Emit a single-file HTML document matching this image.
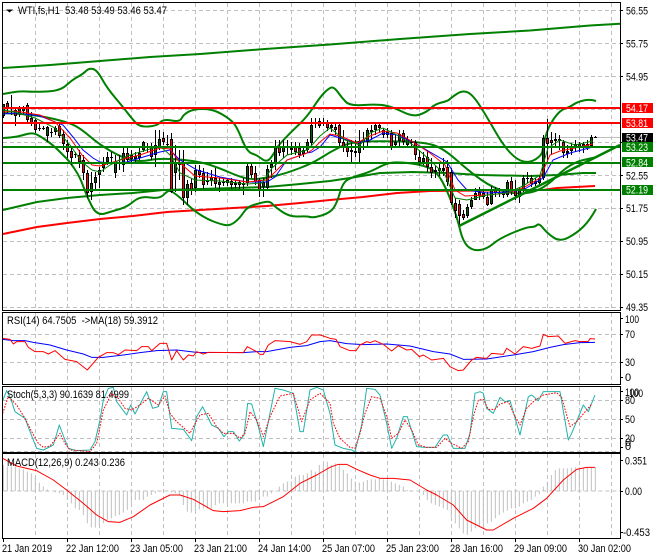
<!DOCTYPE html>
<html><head><meta charset="utf-8"><style>
html,body{margin:0;padding:0;background:#fff;width:660px;height:560px;overflow:hidden}
svg{display:block}
text{font-family:"Liberation Sans",sans-serif;font-size:11px;fill:#000}
.w{fill:#fff}
</style></head><body>
<svg width="660" height="560" viewBox="0 0 660 560" fill="none">
<defs>
<clipPath id="cs"><rect x="3" y="386" width="617" height="66"/></clipPath>
</defs>
<!-- grid -->
<path stroke="#c0c0c0" stroke-dasharray="4 3" d="M35.5 3V310M67.5 3V310M99.5 3V310M131.5 3V310M163.5 3V310M195.5 3V310M227.5 3V310M259.5 3V310M291.5 3V310M323.5 3V310M355.5 3V310M387.5 3V310M419.5 3V310M451.5 3V310M483.5 3V310M515.5 3V310M547.5 3V310M579.5 3V310M611.5 3V310
M35.5 313V384M67.5 313V384M99.5 313V384M131.5 313V384M163.5 313V384M195.5 313V384M227.5 313V384M259.5 313V384M291.5 313V384M323.5 313V384M355.5 313V384M387.5 313V384M419.5 313V384M451.5 313V384M483.5 313V384M515.5 313V384M547.5 313V384M579.5 313V384M611.5 313V384
M35.5 387V451M67.5 387V451M99.5 387V451M131.5 387V451M163.5 387V451M195.5 387V451M227.5 387V451M259.5 387V451M291.5 387V451M323.5 387V451M355.5 387V451M387.5 387V451M419.5 387V451M451.5 387V451M483.5 387V451M515.5 387V451M547.5 387V451M579.5 387V451M611.5 387V451
M35.5 454V538M67.5 454V538M99.5 454V538M131.5 454V538M163.5 454V538M195.5 454V538M227.5 454V538M259.5 454V538M291.5 454V538M323.5 454V538M355.5 454V538M387.5 454V538M419.5 454V538M451.5 454V538M483.5 454V538M515.5 454V538M547.5 454V538M579.5 454V538M611.5 454V538
M3 10.5H620M3 43.5H620M3 76.5H620M3 109.5H620M3 142.5H620M3 175.5H620M3 208.5H620M3 241.5H620M3 274.5H620M3 307.5H620
M3 334.5H620M3 362.5H620M3 400.5H620M3 419.5H620M3 438.5H620M3 451.5H620"/>
<path stroke="#c0c0c0" d="M3 137.5H620"/>
<!-- long MAs -->
<path stroke="#008000" stroke-width="2" d="M3 68L50 65L100 61L150 57L200 54L265 49L330 44.5L400 39L470 34L530 30.5L590 25.5L620 23.7"/>
<path stroke="#008000" stroke-width="2" d="M3 210L37 202L67 198L100 195L133 193L163 190L200 189L267 187L300 184L330 181L350 178L380 173L413 172L447 173L480 175L530 176L557 175L583 173L596 173"/>
<path stroke="#f00" stroke-width="2" d="M3 234L37 227L67 223L100 219L133 216L167 212L200 210L233 208L267 206L300 203L330 200L363 197L397 193L430 191L543 190L557 188L595 186"/>
<!-- Bollinger -->
<path stroke="#008000" stroke-width="2" stroke-linejoin="round" d="M3 94L11.5 92.5Q20 91 26.5 91.5Q33 92 46.5 91.5Q60 91 66 85.5Q72 80 77.5 77Q83 74 86 71Q89 68 93 69Q97 70 102 79Q107 88 115 97.5Q123 107 128 113.5Q133 120 136.500 123.5Q140 127 148.500 126.5Q157 126 160 122.5Q163 119 171.500 120.5Q180 122 181.500 118.5Q183 115 188 112Q193 109 203 109Q213 109 221.500 114Q230 119 233.500 123Q237 127 242 139.5Q247 152 252 153.5Q257 155 262 159Q267 163 271 157.5Q275 152 276 149.5Q277 147 283.500 140Q290 133 298.500 125Q307 117 313.500 107Q320 97 325 92Q330 87 332.500 87.5Q335 88 338.500 93Q342 98 346 102Q350 106 363.500 105Q377 104 385 105.5Q393 107 403 112Q413 117 420 114.5Q427 112 431 108Q435 104 441.500 102.5Q448 101 450 99Q452 97 457.500 93.5Q463 90 468 92.5Q473 95 480 106Q487 117 495 131Q503 145 510 152.5Q517 160 523.500 161.5Q530 163 536 159Q542 155 542.500 151Q543 147 545.500 137Q548 127 554 118.5Q560 110 565 108.5Q570 107 573.500 104.5Q577 102 583.500 100.5Q590 99 596 101"/>
<path stroke="#008000" stroke-width="2" stroke-linejoin="round" d="M3 113L20 114Q37 115 52 118.5Q67 122 73.500 125Q80 128 90 136.5Q100 145 111.500 151.5Q123 158 131.500 160Q140 162 150 160Q160 158 178.500 159.5Q197 161 207 164Q217 167 232 173.5Q247 180 257 179Q267 178 277 175.5Q287 173 300 168Q313 163 321.500 157.5Q330 152 340 147Q350 142 365 141.5Q380 141 401.500 141.5Q423 142 433 145Q443 148 456.500 160Q470 172 481.500 180Q493 188 505 191.5Q517 195 530 192.5Q543 190 556.500 176.5Q570 163 583.500 160Q590 158.500 597 157"/>
<path stroke="#008000" stroke-width="2" stroke-linejoin="round" d="M3 138L10 137.5Q17 137 23.500 135Q30 133 33.500 133.5Q37 134 45 139.5Q53 145 58 150Q63 155 66.500 158.5Q70 162 75 169.5Q80 177 83.500 187Q87 197 92 206.5Q97 216 105 213.5Q113 211 120 209Q127 207 133.500 201.5Q140 196 150 197.5Q160 199 164 194.5Q168 190 170.500 191Q173 192 178 196Q183 200 188 205Q193 210 200 214.5Q207 219 213.500 221.5Q220 224 225 225Q230 226 235 222Q240 218 243.500 212.5Q247 207 253.500 205Q260 203 265 202Q270 201 272.500 204Q275 207 282.500 212Q290 217 298.500 216.5Q307 216 310 217Q313 218 321.500 215.5Q330 213 333.500 208Q337 203 340 192.5Q343 182 348 179.5Q353 177 361.500 174.5Q370 172 378.500 167.5Q387 163 393.500 162.5Q400 162 411.500 163.5Q423 165 430 168.5Q437 172 442 181Q447 190 452 203.5Q457 217 460 229.5Q463 242 468 246.5Q473 251 480 250Q487 249 493.500 243.5Q500 238 513.500 232.5Q527 227 531 227Q535 227 537 225Q539 223 543 228Q547 233 553.500 237.5Q560 242 568.500 237.5Q577 233 583.500 226.5Q590 220 596 209"/>
<!-- candle wicks -->
<path stroke="#000" d="M3.5 104V118M7.5 101V114M11.5 95V115M15.5 108V126M19.5 106V117M23.5 106V114M27.5 103V122M31.5 112V126M35.5 119V133M39.5 124V131M43.5 126V130M47.5 126V142M51.5 128V137M55.5 126V135M59.5 123V138M63.5 130V150M67.5 140V158M71.5 148V165M75.5 152V158M79.5 150V168M83.5 155V180M87.5 170V198M91.5 172V200M95.5 172V190M99.5 167V188M103.5 157V172M107.5 152V165M111.5 152V162M115.5 155V178M119.5 155V170M123.5 147V172M127.5 148V162M131.5 150V162M135.5 152V162M139.5 147V160M143.5 141V152M147.5 143V152M151.5 143V160M155.5 130V167M159.5 130V150M163.5 132V145M167.5 135V147M171.5 133V193M175.5 145V192M179.5 150V180M183.5 150V205M187.5 180V205M191.5 178V195M195.5 165V192M199.5 165V178M203.5 168V190M207.5 172V185M211.5 170V186M215.5 168V188M219.5 178V192M223.5 178V186M227.5 178V186M231.5 178V190M235.5 180V188M239.5 180V190M243.5 178V195M247.5 162V186M251.5 162V178M255.5 166V185M259.5 178V197M263.5 178V197M267.5 165V190M271.5 160V178M275.5 140V170M279.5 140V156M283.5 140V158M287.5 140V155M291.5 142V155M295.5 142V155M299.5 143V158M303.5 147V157M307.5 139V153M311.5 118V146M315.5 118V128M319.5 118V128M323.5 118V126M327.5 120V131M331.5 123V132M335.5 124V135M339.5 124V147M343.5 130V152M347.5 140V157M351.5 140V162M355.5 140V157M359.5 130V162M363.5 132V150M367.5 128V147M371.5 125V140M375.5 122V135M379.5 123V133M383.5 128V138M387.5 128V138M391.5 130V150M395.5 135V148M399.5 130V147M403.5 130V145M407.5 136V147M411.5 139V146M415.5 140V160M419.5 150V165M423.5 152V165M427.5 150V172M431.5 158V178M435.5 166V178M439.5 162V176M443.5 158V176M447.5 160V186M451.5 168V205M455.5 198V218M459.5 200V226M463.5 210V220M467.5 204V218M471.5 197V209M475.5 188V200M479.5 187V200M483.5 190V199M487.5 192V206M491.5 186V205M495.5 187V197M499.5 188V197M503.5 190V198M507.5 180V197M511.5 177V195M515.5 180V200M519.5 187V203M523.5 175V192M527.5 172V183M531.5 175V187M535.5 178V186M539.5 175V186M543.5 135V180M547.5 119V162M551.5 132V155M555.5 133V147M559.5 135V150M563.5 140V158M567.5 145V158M571.5 143V155M575.5 140V152M579.5 142V152M583.5 142V153M587.5 140V150M591.5 135V147M595.5 136V138"/>
<!-- bodies black -->
<path stroke="#000" stroke-width="3" d="M3.5 104V116M7.5 103V108M11.5 107V109M15.5 110V116M19.5 108V114M23.5 107V111M27.5 105V120M31.5 118V123M35.5 120V130M39.5 128V129M43.5 128V129M47.5 127V136M51.5 132V133M55.5 128V132M59.5 126V136M63.5 134V144M67.5 144V152M71.5 151V158M75.5 154V155M79.5 155V162M83.5 160V173M87.5 173V193M91.5 183V192M95.5 177V183M99.5 170V175M103.5 163V168M107.5 157V162M111.5 157V158M115.5 163V173M119.5 162V163M123.5 153V165M127.5 153V160M131.5 155V159M135.5 156V159M139.5 153V158M143.5 142V150M147.5 146V148M151.5 146V157M155.5 145V155M159.5 139V147M163.5 138V142M167.5 144V145M171.5 139V192M175.5 163V173M179.5 162V165M183.5 163V198M187.5 184V198M191.5 183V191M195.5 170V188M199.5 170V175M203.5 173V185M207.5 180V182M211.5 177V181M215.5 178V184M219.5 182V185M223.5 182V183M227.5 180V183M231.5 181V185M235.5 183V185M239.5 182V185M243.5 183V185M247.5 166V183M251.5 166V175M255.5 173V182M259.5 180V190M263.5 182V187M267.5 169V188M271.5 164V168M275.5 147V164M279.5 147V153M283.5 147V152M287.5 147V148M291.5 148V150M295.5 146V152M299.5 148V155M303.5 150V154M307.5 142V150M311.5 125V143M315.5 123V124M319.5 121V126M323.5 122V124M327.5 123V128M331.5 125V128M335.5 127V130M339.5 125V143M343.5 142V148M347.5 147V152M351.5 150V152M355.5 151V153M359.5 141V153M363.5 140V142M367.5 130V142M371.5 130V132M375.5 125V130M379.5 125V128M383.5 130V135M387.5 132V135M391.5 133V147M395.5 142V145M399.5 134V141M403.5 133V142M407.5 139V145M411.5 142V143M415.5 142V155M419.5 157V162M423.5 158V162M427.5 157V167M431.5 167V173M435.5 170V172M439.5 168V171M443.5 168V171M447.5 167V182M451.5 172V203M455.5 203V211M459.5 204V216M463.5 214V218M467.5 207V216M471.5 200V207M475.5 193V200M479.5 192V196M483.5 193V197M487.5 197V205M491.5 190V204M495.5 190V193M499.5 193V194M503.5 192V195M507.5 182V195M511.5 181V192M515.5 189V196M519.5 190V197M523.5 178V190M527.5 178V179M531.5 178V184M535.5 181V184M539.5 178V183M543.5 138V178M547.5 138V144M551.5 140V143M555.5 139V141M559.5 139V141M563.5 142V153M567.5 151V154M571.5 147V151M575.5 144V147M579.5 144V148M583.5 144V147M587.5 144V147M591.5 137V146M595.5 137V138"/>
<path stroke="#f00" d="M7.5 104V107M15.5 111V115M27.5 106V119M31.5 119V122M35.5 121V129M59.5 127V135M63.5 135V143M67.5 145V151M71.5 152V157M79.5 156V161M83.5 161V172M87.5 174V192M127.5 154V159M151.5 147V156M163.5 139V141M171.5 140V191M183.5 164V197M191.5 184V190M199.5 171V174M203.5 174V184M215.5 179V183M231.5 182V184M239.5 183V184M251.5 167V174M255.5 174V181M259.5 181V189M279.5 148V152M295.5 147V151M299.5 149V154M319.5 122V125M327.5 124V127M335.5 128V129M339.5 126V142M343.5 143V147M347.5 148V151M379.5 126V127M383.5 131V134M391.5 134V146M403.5 134V141M415.5 143V154M419.5 158V161M427.5 158V166M431.5 168V172M447.5 168V181M451.5 173V202M455.5 204V210M459.5 205V215M463.5 215V217M479.5 193V195M483.5 194V196M487.5 198V204M495.5 191V192M503.5 193V194M511.5 182V191M515.5 190V195M531.5 179V183M547.5 139V143M551.5 141V142M563.5 143V152M579.5 145V147M587.5 145V146"/>
<path stroke="#006000" d="M3.5 105V115M19.5 109V113M23.5 108V110M47.5 128V135M55.5 129V131M91.5 184V191M95.5 178V182M99.5 171V174M103.5 164V167M107.5 158V161M115.5 164V172M123.5 154V164M131.5 156V158M135.5 157V158M139.5 154V157M143.5 143V149M155.5 146V154M159.5 140V146M175.5 164V172M187.5 185V197M195.5 171V187M211.5 178V180M219.5 183V184M227.5 181V182M247.5 167V182M263.5 183V186M267.5 170V187M271.5 165V167M275.5 148V163M283.5 148V151M303.5 151V153M307.5 143V149M311.5 126V142M359.5 142V152M367.5 131V141M375.5 126V129M387.5 133V134M395.5 143V144M399.5 135V140M407.5 140V144M423.5 159V161M439.5 169V170M467.5 208V215M471.5 201V206M475.5 194V199M491.5 191V203M507.5 183V194M519.5 191V196M523.5 179V189M535.5 182V183M539.5 179V182M543.5 139V177M571.5 148V150M575.5 145V146M583.5 145V146M591.5 138V145"/>
<!-- thin MAs -->
<path stroke="#00f" d="M3 114L15 113L40 116L63 125L73 137L83 150L93 158L100 162L110 163L127 162L140 158L160 152L170 150L180 160L197 170L220 177L247 182L267 182L275 177L287 160L307 153L312 152L320 147L330 135L337 137L357 143L370 140L383 133L397 135L413 142L430 152L447 162L458 180L467 190L487 193L507 192L523 190L543 178L553 160L570 153L593 147"/>
<path stroke="#f00" d="M3 112L15 111L40 115L55 122L70 138L82 155L92 165L100 166L110 163L127 158L140 155L160 148L170 149L180 163L195 176L220 178L247 182L267 180L275 172L287 160L307 153L312 150L320 142L330 134L340 136L357 143L370 136L383 131L397 133L413 142L430 153L445 165L455 190L465 196L487 195L507 193L523 188L540 178L550 155L560 151L570 149L593 144"/>
<path stroke="#008000" d="M3 110L15 112L35 118L55 128L70 145L82 162L92 170L100 172L110 165L127 156L140 152L160 146L170 155L180 173L195 180L220 181L247 184L262 183L272 168L287 155L307 150L312 145L320 136L330 128L345 140L360 145L370 133L383 128L397 135L413 145L430 160L445 175L455 198L467 200L487 195L507 193L523 186L540 175L548 148L560 140L575 145L593 141"/>
<!-- horizontal + trend -->
<path stroke="#f00" stroke-width="2" d="M3 108H620M3 123H620"/>
<path stroke="#008000" stroke-width="2" d="M3 147H620M3 163H620M3 190H620"/>
<path stroke="#008000" stroke-width="2.500" d="M459 226L620 145"/>
<!-- RSI -->
<g transform="translate(0 310) scale(.33333)" stroke-width="3" stroke-linejoin="round">
<path stroke="#00f" d="M8 88L40 92L75 92L100 97L150 105L200 120L250 132L275 142L310 142L370 135L420 128L470 122L530 120L590 127L730 128L770 125L800 125L870 112L920 107L960 95L990 92L1040 101L1090 104L1160 102L1230 108L1300 125L1350 132L1390 148L1460 147L1540 135L1600 125L1650 112L1690 104L1740 98L1785 97"/>
<path stroke="#f00" d="M8 85L30 88L40 102L50 95L75 95L85 112L105 125L130 125L145 132L165 122L195 148L230 155L262 180L295 142L320 128L340 128L355 134L375 120L410 122L425 110L445 110L455 122L480 100L500 100L515 150L530 122L550 150L565 135L580 138L590 125L610 132L625 127L730 128L742 110L770 125L780 133L790 133L805 105L825 92L870 95L900 103L920 95L935 75L960 75L970 78L990 85L1008 88L1020 110L1050 122L1068 122L1080 105L1100 95L1110 98L1125 92L1150 103L1175 123L1195 107L1220 120L1235 118L1258 140L1270 135L1295 150L1330 145L1350 170L1375 182L1390 180L1415 150L1430 142L1460 145L1475 130L1510 133L1520 115L1545 132L1570 110L1595 115L1620 108L1630 73L1645 80L1675 78L1695 100L1725 92L1740 95L1765 94L1770 86L1785 87"/>
</g>
<!-- Stoch -->
<g clip-path="url(#cs)"><g transform="translate(0 310) scale(.33333)" stroke-width="3" stroke-linejoin="round">
<path stroke="#20b2aa" d="M8 272L20 242L32 265L45 305L75 325L92 370L100 390L110 415L130 420L160 405L178 345L195 390L205 415L230 422L270 420L285 395L300 330L310 270L325 235L340 232L350 275L380 315L392 285L405 312L440 245L458 295L475 290L490 245L500 245L515 355L550 358L575 392L590 320L608 290L635 345L655 355L672 380L685 365L700 365L718 393L732 375L743 280L755 282L775 350L790 410L825 235L850 240L880 250L900 365L910 365L930 240L950 232L970 240L990 310L1005 405L1030 415L1055 420L1065 425L1085 345L1100 235L1125 238L1140 255L1160 340L1175 415L1190 385L1210 320L1222 320L1250 410L1275 412L1305 412L1330 375L1342 375L1360 415L1395 415L1410 370L1425 250L1440 245L1450 250L1460 295L1480 310L1500 262L1515 275L1530 272L1560 375L1585 260L1595 255L1615 272L1630 245L1680 245L1705 390L1715 370L1750 285L1765 305L1785 255"/>
<path stroke="#f00" stroke-dasharray="5 4" d="M8 310L25 260L50 285L75 325L95 365L115 400L130 412L150 408L165 390L180 370L195 400L210 420L240 422L270 425L290 400L310 300L335 250L355 265L375 295L395 300L420 285L445 265L475 285L495 258L510 310L530 335L570 370L580 350L600 315L625 310L650 350L670 370L700 370L720 385L735 370L750 305L770 330L790 380L810 320L840 258L880 250L895 300L905 335L930 270L960 250L990 280L1000 340L1020 385L1050 412L1065 415L1080 370L1095 310L1115 260L1140 265L1160 320L1175 385L1195 370L1215 330L1235 360L1255 405L1280 412L1310 412L1335 385L1355 400L1385 415L1405 395L1420 320L1435 270L1450 268L1465 298L1485 298L1500 282L1525 275L1545 320L1560 345L1580 295L1605 270L1630 255L1670 248L1685 262L1710 350L1730 335L1760 300L1775 282"/>
</g></g>
<!-- MACD hist -->
<g transform="translate(0 440) scale(.33333)" stroke-width="3">
<path stroke="#c0c0c0" stroke-dasharray="12 9" d="M10 153H1860"/>
<path stroke="#c0c0c0" d="M10 153V75M22 153V80M34 153V80M46 153V80M58 153V85M70 153V88M82 153V95M94 153V100M106 153V110M118 153V128M130 153V140M142 153V148M166 153V157M178 153V160M190 153V165M202 153V180M214 153V190M226 153V205M238 153V210M250 153V225M262 153V250M274 153V262M286 153V263M298 153V258M310 153V250M322 153V240M334 153V235M346 153V228M358 153V225M370 153V218M382 153V210M394 153V190M406 153V180M418 153V180M430 153V180M442 153V170M454 153V165M466 153V160M478 153V155M514 153V157M526 153V160M538 153V165M550 153V195M562 153V215M574 153V218M586 153V212M598 153V208M610 153V205M622 153V205M634 153V205M646 153V195M658 153V190M670 153V190M682 153V190M694 153V190M706 153V190M718 153V190M730 153V190M742 153V185M754 153V185M766 153V185M778 153V180M790 153V170M802 153V170M814 153V160M826 153V155M838 153V140M850 153V130M862 153V125M874 153V125M886 153V110M898 153V105M910 153V105M922 153V100M934 153V90M946 153V95M958 153V75M970 153V72M982 153V65
M994 153V75M1006 153V70M1018 153V72M1030 153V90M1042 153V100M1054 153V115M1066 153V125M1078 153V128M1090 153V125M1102 153V120M1114 153V118M1126 153V118M1138 153V115M1150 153V118M1162 153V118M1174 153V125M1186 153V130M1198 153V135M1210 153V140M1222 153V150M1270 153V165M1282 153V180M1294 153V190M1306 153V195M1318 153V200M1330 153V205M1342 153V210M1354 153V230M1366 153V250M1378 153V265M1390 153V280M1402 153V285M1414 153V275M1426 153V265M1438 153V260M1450 153V255M1462 153V250M1474 153V245M1486 153V235M1498 153V225M1510 153V218M1522 153V212M1534 153V205M1546 153V205M1558 153V200M1570 153V190M1582 153V185M1594 153V180M1606 153V170M1618 153V163M1630 153V140M1642 153V125M1654 153V105M1666 153V90M1678 153V85M1690 153V85M1702 153V85M1714 153V83M1726 153V82M1738 153V82M1750 153V82M1762 153V82M1774 153V82M1786 153V82"/>
<path stroke="#f00" stroke-linejoin="round" d="M8 55L50 78L80 85L110 92L160 120L200 150L250 190L290 225L325 245L360 247L400 230L450 195L510 165L540 165L580 178L640 212L670 215L720 212L760 202L790 200L850 170L900 130L950 105L990 82L1015 73L1040 73L1070 88L1110 105L1140 115L1180 115L1230 120L1280 150L1310 165L1360 195L1400 240L1460 270L1480 270L1540 235L1600 205L1640 175L1690 120L1730 88L1760 82L1785 82"/>
</g>
<!-- frames -->
<path stroke="#000" d="M2.5 2.500H620.500V310.500H2.500ZM2.500 312.500H620.500V384.500H2.500ZM2.500 386.500H620.500V452.500H2.500ZM2.500 453.500H620.500V538.500H2.500Z"/>
<path stroke="#000" d="M620 10.5h3M620 43.5h3M620 76.5h3M620 142.5h3M620 175.5h3M620 208.5h3M620 241.5h3M620 274.5h3M620 307.5h3M620 318.5h3M620 334.5h3M620 362.5h3M620 377.5h3M620 391.5h3M620 400.5h3M620 419.5h3M620 438.5h3M620 447.5h3M620 460.5h3M620 491.5h3M620 532.5h3M3.500 539v3M67.500 539v3M131.500 539v3M195.500 539v3M259.500 539v3M323.500 539v3M387.500 539v3M451.500 539v3M515.500 539v3M579.500 539v3"/>
<path fill="#000" d="M6 9.5h7l-3.5 3z"/>
<!-- labels panels -->
<text x="18" y="14" textLength="149" lengthAdjust="spacingAndGlyphs">WTI,fs,H1&#160; 53.48 53.49 53.46 53.47</text>
<text x="7" y="324" textLength="151" lengthAdjust="spacingAndGlyphs">RSI(14) 64.7505&#160; -&gt;MA(18) 59.3912</text>
<text x="7" y="398" textLength="122" lengthAdjust="spacingAndGlyphs">Stoch(5,3,3) 90.1639 81.4999</text>
<text x="7" y="466" textLength="118" lengthAdjust="spacingAndGlyphs">MACD(12,26,9) 0.243 0.236</text>
<!-- price axis -->
<text x="626" y="14.500" textLength="22" lengthAdjust="spacingAndGlyphs">56.55</text>
<text x="626" y="47.500" textLength="22" lengthAdjust="spacingAndGlyphs">55.75</text>
<text x="626" y="80.500" textLength="22" lengthAdjust="spacingAndGlyphs">54.95</text>
<rect x="622" y="103" width="31" height="10" fill="#f00"/><text class="w" x="626" y="112" textLength="22" lengthAdjust="spacingAndGlyphs">54.17</text>
<rect x="622" y="118" width="31" height="10" fill="#f00"/><text class="w" x="626" y="127" textLength="22" lengthAdjust="spacingAndGlyphs">53.81</text>
<rect x="622" y="133" width="31" height="10" fill="#000"/><text class="w" x="626" y="141.500" textLength="22" lengthAdjust="spacingAndGlyphs">53.47</text>
<rect x="622" y="142" width="31" height="10" fill="#008000"/><text class="w" x="626" y="151" textLength="22" lengthAdjust="spacingAndGlyphs">53.23</text>
<rect x="622" y="157" width="31" height="10" fill="#008000"/><text class="w" x="626" y="166.500" textLength="22" lengthAdjust="spacingAndGlyphs">52.84</text>
<text x="626" y="179.500" textLength="22" lengthAdjust="spacingAndGlyphs">52.55</text>
<rect x="622" y="185" width="31" height="10" fill="#008000"/><text class="w" x="626" y="193.500" textLength="22" lengthAdjust="spacingAndGlyphs">52.19</text>
<text x="626" y="212" textLength="22" lengthAdjust="spacingAndGlyphs">51.75</text>
<text x="626" y="245" textLength="22" lengthAdjust="spacingAndGlyphs">50.95</text>
<text x="626" y="278" textLength="22" lengthAdjust="spacingAndGlyphs">50.15</text>
<text x="626" y="311" textLength="22" lengthAdjust="spacingAndGlyphs">49.35</text>
<text x="625" y="323" textLength="14" lengthAdjust="spacingAndGlyphs">100</text>
<text x="625" y="338" textLength="10" lengthAdjust="spacingAndGlyphs">70</text>
<text x="625" y="366" textLength="10" lengthAdjust="spacingAndGlyphs">30</text>
<text x="625" y="381">0</text>
<text x="625" y="396" textLength="14" lengthAdjust="spacingAndGlyphs">100</text>
<text x="629" y="397" textLength="14" lengthAdjust="spacingAndGlyphs">100</text>
<text x="625" y="404" textLength="10" lengthAdjust="spacingAndGlyphs">80</text>
<text x="625" y="423" textLength="10" lengthAdjust="spacingAndGlyphs">50</text>
<text x="625" y="442" textLength="10" lengthAdjust="spacingAndGlyphs">20</text>
<text x="625" y="446">0</text>
<text x="625" y="450">0</text>
<text x="625" y="464.500" textLength="22" lengthAdjust="spacingAndGlyphs">0.351</text>
<text x="625" y="495" textLength="17" lengthAdjust="spacingAndGlyphs">0.00</text>
<text x="623" y="536" textLength="27" lengthAdjust="spacingAndGlyphs">-0.453</text>
<!-- time axis -->
<text x="2" y="552" textLength="50" lengthAdjust="spacingAndGlyphs">21 Jan 2019</text>
<text x="66" y="552" textLength="53" lengthAdjust="spacingAndGlyphs">22 Jan 12:00</text>
<text x="130" y="552" textLength="53" lengthAdjust="spacingAndGlyphs">23 Jan 05:00</text>
<text x="194" y="552" textLength="53" lengthAdjust="spacingAndGlyphs">23 Jan 21:00</text>
<text x="258" y="552" textLength="53" lengthAdjust="spacingAndGlyphs">24 Jan 14:00</text>
<text x="322" y="552" textLength="53" lengthAdjust="spacingAndGlyphs">25 Jan 07:00</text>
<text x="386" y="552" textLength="53" lengthAdjust="spacingAndGlyphs">25 Jan 23:00</text>
<text x="450" y="552" textLength="53" lengthAdjust="spacingAndGlyphs">28 Jan 16:00</text>
<text x="514" y="552" textLength="53" lengthAdjust="spacingAndGlyphs">29 Jan 09:00</text>
<text x="578" y="552" textLength="53" lengthAdjust="spacingAndGlyphs">30 Jan 02:00</text>
</svg>
</body></html>
